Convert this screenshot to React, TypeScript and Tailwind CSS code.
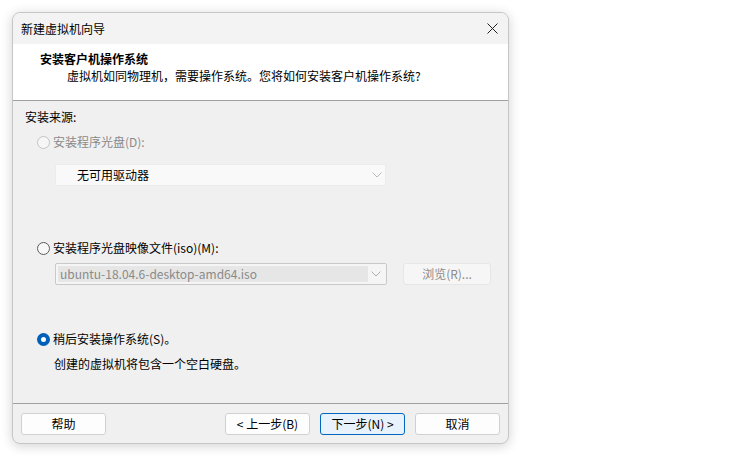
import React from "react";

const font = { fontFamily: '"Noto Sans CJK SC", "Noto Sans", sans-serif' };

const Radio = ({ state }: { state: "disabled" | "off" | "on" }) => {
  if (state === "on") {
    return (
      <span className="w-[13px] h-[13px] rounded-full bg-[#005fb8] flex items-center justify-center shrink-0">
        <span className="w-[5px] h-[5px] rounded-full bg-white" />
      </span>
    );
  }
  return (
    <span
      className={
        state === "disabled"
          ? "w-[13px] h-[13px] rounded-full border border-[#c4c4c4] bg-[#f6f6f6] shrink-0"
          : "w-[13px] h-[13px] rounded-full border border-[#5c5c5c] bg-[#f7f7f7] shrink-0"
      }
    />
  );
};

const Chevron = ({ color }: { color: string }) => (
  <svg width="10" height="6" viewBox="0 0 10 6" fill="none">
    <path d="M0.5 0.5L5 5L9.5 0.5" stroke={color} strokeWidth="1" />
  </svg>
);

const Btn = ({ label, primary }: { label: string; primary?: boolean }) => (
  <button
    className={
      primary
        ? "w-[85px] h-[22px] rounded-[3px] border border-[#0067c0] bg-[#e8f2fc] text-[12px] text-black flex items-center justify-center"
        : "w-[85px] h-[22px] rounded-[3px] border border-[#d0d0d0] bg-[#fdfdfd] text-[12px] text-black flex items-center justify-center"
    }
  >
    {label}
  </button>
);

export default function App() {
  return (
    <div className="w-[749px] h-[455px] bg-white overflow-hidden" style={font}>
      <div className="ml-[12px] mt-[12px] w-[497px] h-[432px] rounded-[8px] border border-[#c6c6c6] bg-[#f0f0f0] overflow-hidden shadow-[0_2px_12px_rgba(0,0,0,0.18)] flex flex-col">
        <div className="h-[31px] bg-[#f3f3f3] flex items-center justify-between pl-[8px] pr-[10px] shrink-0">
          <span className="text-[12px] text-black">新建虚拟机向导</span>
          <svg width="11" height="11" viewBox="0 0 11 11">
            <path d="M0.5 0.5L10.5 10.5M10.5 0.5L0.5 10.5" stroke="#222" strokeWidth="1" />
          </svg>
        </div>
        <div className="h-[57px] bg-white border-b border-[#a0a0a0] shrink-0 pt-[6px]">
          <div className="pl-[27px] text-[12px] font-bold text-black leading-[17px]">安装客户机操作系统</div>
          <div className="pl-[54px] text-[12px] text-black leading-[17px]">
            虚拟机如同物理机，需要操作系统。您将如何安装客户机操作系统?
          </div>
        </div>
        <div className="flex-1 pl-[12px] pt-[8px]">
          <div className="text-[12px] text-black leading-[16px]">安装来源:</div>
          <div className="mt-[9px] ml-[12px] flex items-center gap-[3px] h-[16px]">
            <Radio state="disabled" />
            <span className="text-[12px] text-[#8a8a8a]">安装程序光盘(D):</span>
          </div>
          <div className="mt-[14px] ml-[30px] w-[331px] h-[22px] bg-[#f9f9f9] border border-[#ececec] flex items-center justify-between pl-[21px] pr-[3px]">
            <span className="text-[12px] text-black">无可用驱动器</span>
            <Chevron color="#b8b8b8" />
          </div>
          <div className="mt-[54px] ml-[12px] flex items-center gap-[3px] h-[16px]">
            <Radio state="off" />
            <span className="text-[12px] text-black">安装程序光盘映像文件(iso)(M):</span>
          </div>
          <div className="mt-[7px] ml-[30px] flex items-center gap-[16px]">
            <div className="w-[332px] h-[22px] bg-[#f5f5f5] border border-[#c9c9c9] rounded-[2px] flex items-center p-[2px]">
              <div className="w-[310px] h-full bg-[#e6e6e6] flex items-center pl-[2px] text-[12px] text-[#8a8a8a]">
                ubuntu-18.04.6-desktop-amd64.iso
              </div>
              <div className="flex-1 flex items-center justify-center">
                <Chevron color="#b0b0b0" />
              </div>
            </div>
            <div className="w-[88px] h-[22px] rounded-[3px] border border-[#e6e6e6] bg-[#f6f6f6] flex items-center justify-center text-[12px] text-[#8a8a8a]">
              浏览(R)...
            </div>
          </div>
          <div className="mt-[46px] ml-[12px] flex items-center gap-[3px] h-[16px]">
            <Radio state="on" />
            <span className="text-[12px] text-black">稍后安装操作系统(S)。</span>
          </div>
          <div className="mt-[9px] ml-[29px] text-[12px] text-black leading-[16px]">创建的虚拟机将包含一个空白硬盘。</div>
        </div>
        <div className="h-[40px] border-t border-[#a0a0a0] shrink-0 flex items-start pt-[9px] pl-[8px] pr-[8px]">
          <Btn label="帮助" />
          <div className="flex-1" />
          <div className="flex gap-[10px]">
            <Btn label="< 上一步(B)" />
            <Btn label="下一步(N) >" primary />
            <Btn label="取消" />
          </div>
        </div>
      </div>
    </div>
  );
}
